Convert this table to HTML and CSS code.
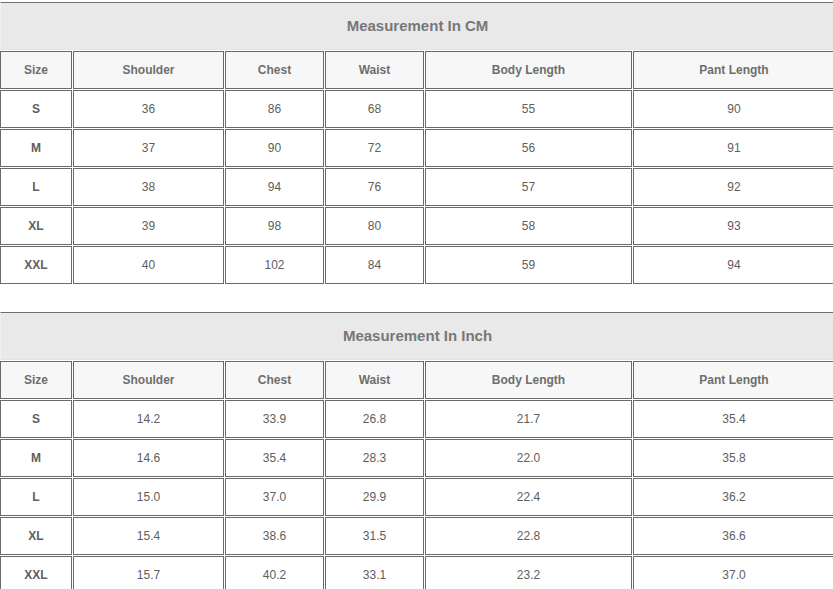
FILE: index.html
```html
<!DOCTYPE html>
<html lang="en">
<head>
<meta charset="utf-8">
<title>Size Chart</title>
<link rel="stylesheet" href="styles.css">
</head>
<body>
<div class="charts">
  <table class="size-table">
    <colgroup>
      <col class="c-size"><col class="c-shoulder"><col class="c-chest"><col class="c-waist"><col class="c-body"><col class="c-pant">
    </colgroup>
    <thead>
      <tr><th class="title" colspan="6">Measurement In CM</th></tr>
      <tr class="head"><th>Size</th><th>Shoulder</th><th>Chest</th><th>Waist</th><th>Body Length</th><th>Pant Length</th></tr>
    </thead>
    <tbody>
      <tr><td class="sz">S</td><td>36</td><td>86</td><td>68</td><td>55</td><td>90</td></tr>
      <tr><td class="sz">M</td><td>37</td><td>90</td><td>72</td><td>56</td><td>91</td></tr>
      <tr><td class="sz">L</td><td>38</td><td>94</td><td>76</td><td>57</td><td>92</td></tr>
      <tr><td class="sz">XL</td><td>39</td><td>98</td><td>80</td><td>58</td><td>93</td></tr>
      <tr><td class="sz">XXL</td><td>40</td><td>102</td><td>84</td><td>59</td><td>94</td></tr>
    </tbody>
  </table>

  <table class="size-table">
    <colgroup>
      <col class="c-size"><col class="c-shoulder"><col class="c-chest"><col class="c-waist"><col class="c-body"><col class="c-pant">
    </colgroup>
    <thead>
      <tr><th class="title" colspan="6">Measurement In Inch</th></tr>
      <tr class="head"><th>Size</th><th>Shoulder</th><th>Chest</th><th>Waist</th><th>Body Length</th><th>Pant Length</th></tr>
    </thead>
    <tbody>
      <tr><td class="sz">S</td><td>14.2</td><td>33.9</td><td>26.8</td><td>21.7</td><td>35.4</td></tr>
      <tr><td class="sz">M</td><td>14.6</td><td>35.4</td><td>28.3</td><td>22.0</td><td>35.8</td></tr>
      <tr><td class="sz">L</td><td>15.0</td><td>37.0</td><td>29.9</td><td>22.4</td><td>36.2</td></tr>
      <tr><td class="sz">XL</td><td>15.4</td><td>38.6</td><td>31.5</td><td>22.8</td><td>36.6</td></tr>
      <tr><td class="sz">XXL</td><td>15.7</td><td>40.2</td><td>33.1</td><td>23.2</td><td>37.0</td></tr>
    </tbody>
  </table>
</div>
</body>
</html>
```

FILE: styles.css
```css
html, body {
  margin: 0;
  padding: 0;
  background: #ffffff;
}

body {
  font-family: "Liberation Sans", Arial, sans-serif;
  overflow: hidden;
}

.charts {
  display: flex;
  flex-direction: column;
  gap: 26px;
  padding-top: 1px;
}

.size-table {
  border-collapse: separate;
  border-spacing: 1px;
  table-layout: fixed;
  width: 837px;
  margin-left: -1px;
}

.c-size { width: 72px; }
.c-shoulder { width: 151px; }
.c-chest { width: 99px; }
.c-waist { width: 99px; }
.c-body { width: 207px; }
.c-pant { width: 202px; }

.size-table th,
.size-table td {
  box-sizing: border-box;
  border: 1px solid #6a6a6a;
  height: 38px;
  padding: 0;
  text-align: center;
  vertical-align: middle;
}

.size-table th.title {
  height: 48px;
  padding-bottom: 2px;
  background: #e9e9e9;
  border: 1px solid #e4e4e4;
  border-top-color: #6f6f6f;
  border-left-color: #f0f0f0;
  color: #777777;
  font-size: 15px;
  font-weight: bold;
}

.size-table .head th {
  background: #f7f7f7;
  color: #6e6e6e;
  font-size: 12px;
  font-weight: bold;
}

.size-table td {
  background: #ffffff;
  color: #5e5e5e;
  font-size: 12px;
  font-weight: normal;
}

.size-table td.sz {
  color: #606060;
  font-weight: bold;
  font-size: 12px;
}
```
